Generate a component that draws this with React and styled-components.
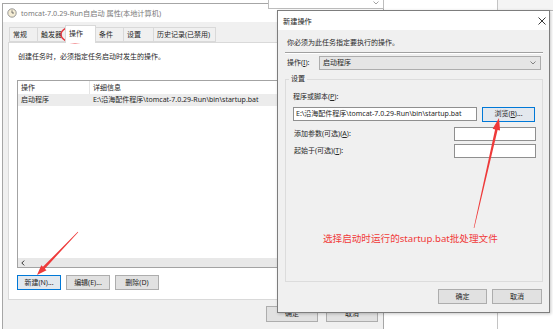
import React from "react";
import styled, { createGlobalStyle } from "styled-components";

const Global = createGlobalStyle`
  html, body { margin: 0; padding: 0; background: #fff; }
  body { font-family: "Noto Sans", "Noto Sans CJK SC", sans-serif; }
`;

const Desktop = styled.div`
  position: relative;
  width: 553px;
  height: 329px;
  overflow: hidden;
  background: #fff;
  font-family: "Noto Sans", "Noto Sans CJK SC", sans-serif;
  font-size: 7px;
  line-height: 10px;
  color: #262626;
`;

const Window = styled.div`
  position: absolute;
  left: ${(p) => p.$x}px;
  top: ${(p) => p.$y}px;
  width: ${(p) => p.$w}px;
  height: ${(p) => p.$h}px;
  box-sizing: border-box;
  border: 1px solid ${(p) => (p.$active ? "#7d7d7d" : "#a6a6a6")};
  background: #f0f0f0;
  display: flex;
  flex-direction: column;
  box-shadow: ${(p) => (p.$active ? "1px 1px 3px rgba(0,0,0,0.22)" : "none")};
`;

const BackWindow = styled(Window)`
  background: #fff;
  border-color: #c4c4c4;
`;

const BackStrip = styled.div`
  height: ${(p) => p.$h}px;
  flex: none;
  background: #f4f4f4;
  border-bottom: 1px solid #b9b9b9;
`;

const DropFragment = styled(Window)`
  background: #fff;
  border-color: #bdbdbd;
  flex-direction: row;
  align-items: flex-end;
  justify-content: flex-end;
  padding: 0 4px 3px 0;
`;

const TitleBar = styled.div`
  height: ${(p) => p.$h}px;
  flex: none;
  box-sizing: border-box;
  background: #fff;
  display: flex;
  align-items: center;
  gap: 4px;
  padding: 0 ${(p) => p.$pr || 4}px 0 ${(p) => p.$pl}px;
  color: ${(p) => (p.$active ? "#1a1a1a" : "#7a7a7a")};
  font-size: 7.2px;
`;

const TitleText = styled.span`
  flex: 1;
  white-space: nowrap;
`;

const Body = styled.div`
  flex: 1;
  display: flex;
  flex-direction: column;
  padding: ${(p) => p.$pad};
`;

const TabStrip = styled.div`
  height: 17px;
  flex: none;
  display: flex;
  align-items: flex-end;
  padding-left: 1px;
`;

const Tab = styled.div`
  width: ${(p) => p.$w}px;
  height: ${(p) => (p.$sel ? 18 : 15)}px;
  margin-bottom: ${(p) => (p.$sel ? -1 : 0)}px;
  margin-left: -1px;
  box-sizing: border-box;
  border: 1px solid #d9d9d9;
  border-bottom: ${(p) => (p.$sel ? "none" : "1px solid #d9d9d9")};
  background: ${(p) => (p.$sel ? "#fff" : "#f0f0f0")};
  position: relative;
  z-index: ${(p) => (p.$sel ? 1 : 0)};
  display: flex;
  align-items: center;
  padding: ${(p) => (p.$sel ? "0 0 2px 3px" : "0 0 0 3px")};
  white-space: nowrap;
  &:first-child { margin-left: 0; }
`;

const Panel = styled.div`
  height: 258px;
  flex: none;
  box-sizing: border-box;
  background: #fff;
  border: 1px solid #d9d9d9;
  padding: 0 8px;
  display: flex;
  flex-direction: column;
`;

const Desc = styled.div`
  margin-top: ${(p) => p.$mt}px;
  padding-left: ${(p) => p.$pl}px;
  white-space: nowrap;
`;

const ListBox = styled.div`
  margin-top: 18px;
  height: 188px;
  box-sizing: border-box;
  border: 1px solid #a3a3a3;
  background: #fff;
  display: flex;
  flex-direction: column;
`;

const ListRow = styled.div`
  height: ${(p) => p.$h}px;
  flex: none;
  display: grid;
  grid-template-columns: 72px 1fr;
  align-items: center;
  background: ${(p) => (p.$sel ? "#ececec" : "#fff")};
`;

const Cell = styled.div`
  height: 100%;
  display: flex;
  align-items: center;
  padding-left: ${(p) => p.$pl}px;
  box-sizing: border-box;
  border-right: ${(p) => (p.$sep ? "1px solid #e5e5e5" : "none")};
  white-space: nowrap;
  overflow: hidden;
`;

const ListFill = styled.div`
  flex: 1;
`;

const HScroll = styled.div`
  height: 9px;
  flex: none;
  background: #e8e8e8;
  display: flex;
  align-items: center;
  padding-left: 3px;
`;

const ButtonRow = styled.div`
  margin-top: ${(p) => p.$mt}px;
  display: flex;
  gap: ${(p) => p.$gap}px;
  justify-content: ${(p) => (p.$end ? "flex-end" : "flex-start")};
  padding-right: ${(p) => p.$pr || 0}px;
`;

const Button = styled.div`
  width: ${(p) => p.$w}px;
  height: ${(p) => p.$h || 15}px;
  margin-top: ${(p) => p.$mt || 0}px;
  flex: none;
  box-sizing: border-box;
  border: 1px solid ${(p) => (p.$default ? "#0078d7" : "#adadad")};
  background: ${(p) => (p.$default ? "#e3e8ee" : "#e1e1e1")};
  display: flex;
  align-items: center;
  justify-content: center;
  white-space: nowrap;
`;

const Footer = styled.div`
  display: flex;
  justify-content: flex-end;
  gap: 8px;
  padding-top: 6px;
`;

const Separator = styled.div`
  margin-top: 4px;
  border-top: 1px solid #a0a0a0;
  border-bottom: 1px solid #fff;
`;

const FieldRow = styled.div`
  margin-top: ${(p) => p.$mt}px;
  height: ${(p) => p.$h}px;
  display: flex;
  align-items: center;
  justify-content: ${(p) => (p.$between ? "space-between" : "flex-start")};
  gap: ${(p) => p.$gap || 0}px;
`;

const Label = styled.div`
  width: ${(p) => (p.$w ? `${p.$w}px` : "auto")};
  padding-left: ${(p) => p.$pl || 0}px;
  flex: none;
  white-space: nowrap;
`;

const Combo = styled.div`
  width: 222px;
  height: 14px;
  box-sizing: border-box;
  border: 1px solid #adadad;
  background: #e5e5e5;
  display: flex;
  align-items: center;
  justify-content: space-between;
  padding: 0 4px 0 3px;
`;

const Group = styled.fieldset`
  margin: 4px 0 0 0;
  height: 208px;
  box-sizing: border-box;
  border: 1px solid #dcdcdc;
  padding: 0 6px 0 7px;
  min-width: 0;
`;

const Legend = styled.legend`
  padding: 0 2px;
  margin-left: -4px;
  line-height: 10px;
  font-size: 7px;
`;

const GroupInner = styled.div`
  padding-top: 8px;
  display: flex;
  flex-direction: column;
`;

const TextBox = styled.div`
  width: ${(p) => p.$w}px;
  height: 14px;
  flex: none;
  box-sizing: border-box;
  border: 1px solid #8f8f8f;
  background: #fff;
  display: flex;
  align-items: center;
  padding-left: 2px;
  white-space: nowrap;
  overflow: hidden;
`;

const U = styled.span`
  text-decoration: underline;
`;

const AnnotationLayer = styled.svg`
  position: absolute;
  left: 0;
  top: 0;
  pointer-events: none;
`;

const Note = styled.div`
  position: absolute;
  left: 323px;
  top: 233px;
  color: #f03a3a;
  font-size: 9.6px;
  line-height: 12px;
  white-space: nowrap;
`;

function arrowPoints(x1, y1, x2, y2, headLen, headHalf, neckHalf, tailHalf) {
  const dx = x2 - x1;
  const dy = y2 - y1;
  const len = Math.hypot(dx, dy);
  const ux = dx / len;
  const uy = dy / len;
  const nx = -uy;
  const ny = ux;
  const bx = x2 - ux * headLen;
  const by = y2 - uy * headLen;
  const pts = [
    [x1 + nx * tailHalf, y1 + ny * tailHalf],
    [bx + nx * neckHalf, by + ny * neckHalf],
    [bx + nx * headHalf, by + ny * headHalf],
    [x2, y2],
    [bx - nx * headHalf, by - ny * headHalf],
    [bx - nx * neckHalf, by - ny * neckHalf],
    [x1 - nx * tailHalf, y1 - ny * tailHalf],
  ];
  return pts.map((p) => p.map((v) => v.toFixed(2)).join(",")).join(" ");
}

const ClockIcon = () => (
  <svg width="10" height="10" viewBox="0 0 10 10">
    <circle cx="5" cy="5" r="4.2" fill="#f4ecd4" stroke="#8c8c8c" strokeWidth="0.9" />
    <path d="M5 2.4 V5 H7" fill="none" stroke="#555" strokeWidth="0.8" />
  </svg>
);

const CloseIcon = () => (
  <svg width="8" height="8" viewBox="0 0 8 8">
    <path d="M0.5 0.5 L7.5 7.5 M7.5 0.5 L0.5 7.5" stroke="#222" strokeWidth="0.9" />
  </svg>
);

const ChevronDown = ({ color = "#666" }) => (
  <svg width="6" height="4" viewBox="0 0 6 4">
    <path d="M0.5 0.5 L3 3 L5.5 0.5" fill="none" stroke={color} strokeWidth="0.8" />
  </svg>
);

const ChevronLeft = () => (
  <svg width="4" height="6" viewBox="0 0 4 6">
    <path d="M3.2 0.6 L0.8 3 L3.2 5.4" fill="none" stroke="#333" strokeWidth="1" />
  </svg>
);

const tabs = [
  { label: "常规", w: 29 },
  { label: "触发器", w: 29 },
  { label: "操作", w: 31, sel: true },
  { label: "条件", w: 29 },
  { label: "设置", w: 31 },
  { label: "历史记录(已禁用)", w: 63 },
];

const PATH = "E:\\沿海配件程序\\tomcat-7.0.29-Run\\bin\\startup.bat";

export default function App() {
  return (
    <Desktop>
      <Global />

      <BackWindow $x={497} $y={-20} $w={80} $h={370}>
        <BackStrip $h={29} />
      </BackWindow>

      <Window $x={2} $y={3} $w={382} $h={340}>
        <TitleBar $h={18} $pl={4}>
          <ClockIcon />
          <TitleText>tomcat-7.0.29-Run自启动 属性(本地计算机)</TitleText>
        </TitleBar>
        <Body $pad="3px 5px 0 5px">
          <TabStrip>
            {tabs.map((t) => (
              <Tab key={t.label} $w={t.w} $sel={t.sel}>
                {t.label}
              </Tab>
            ))}
          </TabStrip>
          <Panel>
            <Desc $mt={9} $pl={1}>创建任务时，必须指定任务启动时发生的操作。</Desc>
            <ListBox>
              <ListRow $h={13}>
                <Cell $pl={3} $sep>操作</Cell>
                <Cell $pl={3}>详细信息</Cell>
              </ListRow>
              <ListRow $h={12} $sel>
                <Cell $pl={3}>启动程序</Cell>
                <Cell $pl={3}>{PATH}</Cell>
              </ListRow>
              <ListFill />
              <HScroll>
                <ChevronLeft />
              </HScroll>
            </ListBox>
            <ButtonRow $mt={7} $gap={5}>
              <Button $w={44} $default>新建(N)...</Button>
              <Button $w={44}>编辑(E)...</Button>
              <Button $w={44}>删除(D)</Button>
            </ButtonRow>
          </Panel>
          <Footer>
            <Button $w={52} $h={16}>确定</Button>
            <Button $w={52} $h={16}>取消</Button>
          </Footer>
        </Body>
      </Window>

      <DropFragment $x={268} $y={-8} $w={116} $h={17}>
        <ChevronDown color="#8a8a8a" />
      </DropFragment>

      <Window $x={277} $y={10} $w={273} $h={303} $active>
        <TitleBar $h={19} $pl={5} $pr={3} $active>
          <TitleText>新建操作</TitleText>
          <CloseIcon />
        </TitleBar>
        <Body $pad="0 6px 0 7px">
          <Desc $mt={8} $pl={2}>你必须为此任务指定要执行的操作。</Desc>
          <Separator />
          <FieldRow $mt={2} $h={14}>
            <Label $w={32} $pl={2}>
              操作(<U>I</U>):
            </Label>
            <Combo>
              <span>启动程序</span>
              <ChevronDown />
            </Combo>
          </FieldRow>
          <Group>
            <Legend>设置</Legend>
            <GroupInner>
              <Label>
                程序或脚本(<U>P</U>):
              </Label>
              <FieldRow $mt={4} $h={16} $gap={5}>
                <TextBox $w={184}>{PATH}</TextBox>
                <Button $w={53} $default>
                  浏览(<U>R</U>)...
                </Button>
              </FieldRow>
              <FieldRow $mt={5} $h={14} $between>
                <Label $pl={1}>
                  添加参数(可选)(<U>A</U>):
                </Label>
                <TextBox $w={82} />
              </FieldRow>
              <FieldRow $mt={3} $h={14} $between>
                <Label $pl={1}>
                  起始于(可选)(<U>T</U>):
                </Label>
                <TextBox $w={82} />
              </FieldRow>
            </GroupInner>
          </Group>
          <ButtonRow $mt={7} $gap={5} $end $pr={1}>
            <Button $w={49}>确定</Button>
            <Button $w={50}>取消</Button>
          </ButtonRow>
        </Body>
      </Window>

      <AnnotationLayer width="553" height="329" viewBox="0 0 553 329">
        <ellipse cx="75" cy="34.5" rx="14" ry="8.3" fill="none" stroke="#e8353b" strokeWidth="1.4" />
        <polygon points={arrowPoints(78, 232, 37, 275, 10, 3.6, 1.3, 0.3)} fill="#ee3a3a" />
        <polygon points={arrowPoints(474, 228, 499, 118, 12, 3.8, 1.3, 0.3)} fill="#ee3a3a" />
      </AnnotationLayer>
      <Note>选择启动时运行的startup.bat批处理文件</Note>
    </Desktop>
  );
}
